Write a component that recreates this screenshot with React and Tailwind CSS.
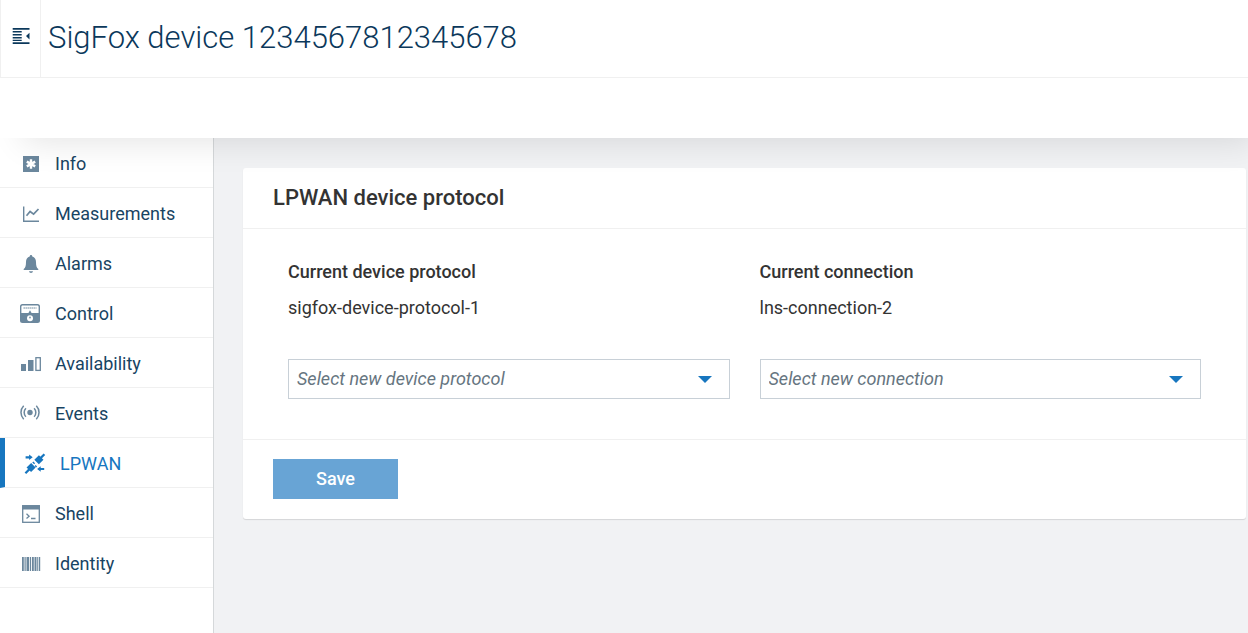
import React from "react";

function InfoIcon() {
  return (
    <svg viewBox="0 0 22 22" className="size-[22px]" aria-hidden="true">
      <rect x="3" y="3" width="16" height="16" fill="currentColor" />
      <path d="M11 6.2v9.6M6.800 8.600l8.400 4.800M15.200 8.600l-8.400 4.800" stroke="#fff" strokeWidth="2.4" />
    </svg>
  );
}

function MeasurementsIcon() {
  return (
    <svg viewBox="0 0 22 22" className="size-[22px]" aria-hidden="true" fill="none" stroke="currentColor">
      <path d="M3.7 3.5v14.8H19" strokeWidth="1.4" />
      <path d="M6.5 12.8l3.6-4.300 3.500 2.700 4.900-5.200" strokeWidth="1.7" />
    </svg>
  );
}

function AlarmsIcon() {
  return (
    <svg viewBox="0 0 22 22" className="size-[22px]" aria-hidden="true" fill="currentColor">
      <path d="M11 2c.8 0 1.3.6 1.3 1.5 2.4.6 3.7 2.600 3.700 5.500 0 4 .6 5.600 2.300 7.100v.9H3.700v-.9C5.400 14.600 6 13 6 9c0-2.900 1.300-4.900 3.700-5.500C9.700 2.600 10.200 2 11 2z" />
      <path d="M9 18.200h4c-.2 1-1 1.700-2 1.700s-1.800-.7-2-1.700z" />
    </svg>
  );
}

function ControlIcon() {
  return (
    <svg viewBox="0 0 22 22" className="size-[22px]" aria-hidden="true">
      <path
        fill="currentColor"
        fillRule="evenodd"
        d="M2.500 1h15A2.500 2.500 0 0 1 20 3.500v14a2.500 2.500 0 0 1-2.500 2.500h-15A2.500 2.500 0 0 1 0 17.500v-14A2.500 2.500 0 0 1 2.500 1zM2.800 2.400c-.8 0-1.400.5-1.400 1.300V10h17.200V3.700c0-.8-.6-1.300-1.400-1.300z"
      />
      <path d="M3.500 5h13" stroke="currentColor" strokeWidth="1.600" strokeDasharray="1.400 .6" opacity=".7" />
      <path d="M10 7.200l1.700 3H8.300z" fill="currentColor" />
      <circle cx="10" cy="15.300" r="3" fill="#fff" />
      <path d="M10 13l1.100 2.200H8.900z" fill="currentColor" />
    </svg>
  );
}

function AvailabilityIcon() {
  return (
    <svg viewBox="0 0 22 22" className="size-[22px]" aria-hidden="true" fill="currentColor">
      <rect x="1" y="11" width="5" height="7" />
      <rect x="8" y="7" width="5.500" height="11" />
      <rect x="15.900" y="4.700" width="4.400" height="12.700" fill="none" stroke="currentColor" strokeWidth="1.300" />
    </svg>
  );
}

function EventsIcon() {
  return (
    <svg viewBox="0 0 22 22" className="size-[22px]" aria-hidden="true" fill="none" stroke="currentColor" strokeWidth="1.500">
      <circle cx="10" cy="9.500" r="2.700" fill="currentColor" stroke="none" />
      <path d="M5.900 5.200a6.200 6.200 0 0 0 0 8.600M14.100 5.200a6.200 6.200 0 0 1 0 8.600" />
      <path d="M3.700 2.800a9.600 9.600 0 0 0 0 13.400M16.300 2.800a9.600 9.600 0 0 1 0 13.400" />
    </svg>
  );
}

function LpwanIcon() {
  return (
    <svg viewBox="0 0 22 22" className="size-[22px]" aria-hidden="true" fill="currentColor">
      <path d="M20.400 1.200L16 5.600M6 15.600L1.400 20.200" stroke="currentColor" strokeWidth="2.200" />
      <path d="M17.200 4.400L12.600 9M9.400 12.200L4.800 16.800" stroke="currentColor" strokeWidth="6.400" />
      <path d="M8.800 9l1.800 1.800M11.200 12.600l1.400 1.400" stroke="currentColor" strokeWidth="1.400" />
      <path d="M1.600 3.200h3.500V1.500L8.700 4.300 5.100 7.100V5.400H1.600z" />
      <path d="M20.200 14.900h-3.500v-1.700L13.100 16l3.600 2.800v-1.700h3.500z" />
    </svg>
  );
}

function ShellIcon() {
  return (
    <svg viewBox="0 0 22 22" className="size-[22px]" aria-hidden="true" fill="none" stroke="currentColor">
      <rect x="2.700" y="2.700" width="16.600" height="16.600" strokeWidth="1.300" />
      <path d="M2 4.500h18" strokeWidth="4" />
      <path d="M6.500 10.800l2.600 2.400-2.600 2.400M11 15.500h4.500" strokeWidth="1.300" />
    </svg>
  );
}

function IdentityIcon() {
  return (
    <svg viewBox="0 0 22 22" className="size-[22px]" aria-hidden="true" fill="currentColor">
      <path d="M2 4h1.800v14H2zM4.500 4h1.200v14H4.500zM6.500 4H9v14H6.500zM9.800 4h1.300v14H9.800zM12 4h1.800v14H12zM14.500 4h2v14h-2zM17.200 4h1.100v14h-1.100zM19 4h1.200v14H19z" />
    </svg>
  );
}

function MenuIcon() {
  return (
    <svg viewBox="0 0 18 18" className="size-[18px]" aria-hidden="true" fill="currentColor">
      <path d="M.7 1h16.800v1.700H.7zM.7 4h9v1.500h-9zM.7 7h9v1.500h-9zM.7 10h9v1.500h-9zM.7 12.800h9v1.200h-9zM.7 15.300h16.800V17H.7zM17.500 5.800v6.600L14 9.100z" />
    </svg>
  );
}

const items = [
  { label: "Info", Icon: InfoIcon },
  { label: "Measurements", Icon: MeasurementsIcon },
  { label: "Alarms", Icon: AlarmsIcon },
  { label: "Control", Icon: ControlIcon },
  { label: "Availability", Icon: AvailabilityIcon },
  { label: "Events", Icon: EventsIcon },
  { label: "LPWAN", Icon: LpwanIcon, active: true },
  { label: "Shell", Icon: ShellIcon },
  { label: "Identity", Icon: IdentityIcon },
];

function Field({ id, title, value, placeholder }) {
  return (
    <div className="min-w-0 flex-1">
      <label htmlFor={id} className="block leading-6 font-medium">{title}</label>
      <p className="mt-3 leading-6">{value}</p>
      <div className="relative mt-[39px]">
        <select
          id={id}
          defaultValue=""
          className="block h-10 w-full appearance-none border border-[#c8d0d7] bg-white pr-12 pl-2 text-[#66757f] italic"
        >
          <option value="">{placeholder}</option>
          <option value={value}>{value}</option>
        </select>
        <svg viewBox="0 0 14 7" className="pointer-events-none absolute top-[17px] right-[18px] h-[7px] w-[14px] text-[#1776bf]" aria-hidden="true">
          <path d="M0 0h14L7 7z" fill="currentColor" />
        </svg>
      </div>
    </div>
  );
}

export default function App() {
  return (
    <div className="flex min-h-screen flex-col overflow-x-clip bg-[#f1f2f4] font-[Roboto,sans-serif] text-lg text-[#333]">
      <header className="relative z-10 bg-white shadow-[15px_12px_32px_-8px_rgba(0,0,0,0.11)]">
        <div className="flex h-[78px] border-b border-[#f0f0f0]">
          <button type="button" aria-label="Toggle menu" className="flex w-[41px] items-center justify-center border-x border-[#f0f0f0] pb-1.5 text-[#0b385b]">
            <MenuIcon />
          </button>
          <h1 className="pl-[7px] text-[31px] leading-[76px] font-light text-[#0b385b]">SigFox device 1234567812345678</h1>
        </div>
        <div className="h-[60px]" />
      </header>
      <div className="flex flex-1">
        <nav className="w-[214px] shrink-0 border-r border-[#d5d8da] bg-white">
          <ul>
            {items.map(({ label, Icon, active }) => (
              <li key={label}>
                <a
                  href="#"
                  aria-current={active ? "page" : undefined}
                  className={
                    active
                      ? "flex h-[50px] items-center gap-3.5 border-b border-l-[5px] border-b-[#f0f0f0] border-l-[#1776bf] pt-0.5 pl-[19px] text-[#1776bf]"
                      : "flex h-[50px] items-center gap-[13px] border-b border-[#f0f0f0] pt-0.5 pl-5 text-[#6b879d]"
                  }
                >
                  <Icon />
                  <span className={active ? "" : "text-[#184463]"}>{label}</span>
                </a>
              </li>
            ))}
          </ul>
        </nav>
        <main className="min-w-0 flex-1 pt-[30px] pr-[2px] pl-[29px]">
          <section className="rounded-[3px] bg-white shadow-[0_1px_1px_rgba(0,0,0,0.12)]">
            <h2 className="border-b border-[#f0f0f0] px-[30px] text-[22px] leading-[60px] font-medium">LPWAN device protocol</h2>
            <form>
              <div className="flex gap-[30px] px-[45px] pt-[31px] pb-10">
                <Field id="protocol" title="Current device protocol" value="sigfox-device-protocol-1" placeholder="Select new device protocol" />
                <Field id="connection" title="Current connection" value="lns-connection-2" placeholder="Select new connection" />
              </div>
              <div className="border-t border-[#f0f0f0] px-[30px] pt-[19px] pb-5">
                <button type="button" className="h-10 w-[125px] bg-[#68a4d5] font-medium text-white">Save</button>
              </div>
            </form>
          </section>
        </main>
      </div>
    </div>
  );
}
